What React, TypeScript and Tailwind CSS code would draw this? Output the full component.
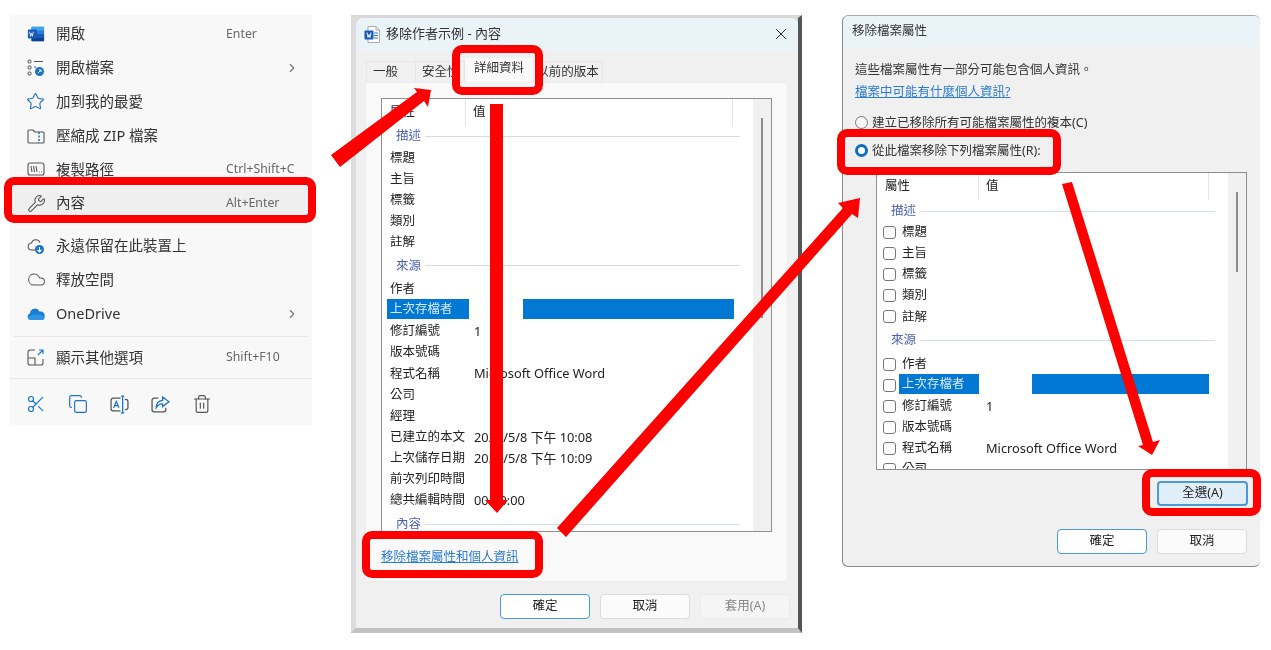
import React from "react";
import { Star, Wrench, Cloud, Scissors, Copy, Trash2, ChevronRight, X } from "lucide-react";

const WordIcon = ({ size = 20 }: { size?: number }) => (
  <svg width={size} height={size} viewBox="0 0 20 20">
    <rect x="5" y="2" width="14" height="16" rx="1" fill="#2b7cd3" />
    <rect x="5" y="2" width="14" height="4" fill="#41a5ee" />
    <rect x="5" y="10" width="14" height="4" fill="#185abd" />
    <rect x="5" y="14" width="14" height="4" fill="#103f91" />
    <rect x="1" y="5" width="10" height="10" rx="1" fill="#185abd" />
    <path d="M3 7.500l1 5 1-3.500 1 3.500 1-5" stroke="#fff" strokeWidth="0.9" fill="none" />
  </svg>
);

const WordDoc = () => (
  <svg width="16" height="17" viewBox="0 0 16 17">
    <path d="M4 .5h8l3.500 3.500v12.500H4z" fill="#fff" stroke="#aaa" strokeWidth="1" />
    <path d="M12 .5v3.500h3.500" fill="none" stroke="#aaa" strokeWidth="1" />
    <path d="M10 7h4M10 9.500h4M10 12h4" stroke="#2b7cd3" strokeWidth="1" />
    <rect x="0.500" y="4.500" width="9" height="9" rx="1" fill="#185abd" />
    <path d="M2 6.500l1 5 1-3 1 3 1-5" stroke="#fff" strokeWidth="0.9" fill="none" transform="translate(1 0)" />
  </svg>
);

const OpenWith = () => (
  <svg width="18" height="18" viewBox="0 0 18 18" fill="none" stroke="#555" strokeWidth="1">
    <rect x="1" y="1" width="3" height="3" rx="1" />
    <rect x="1" y="7" width="3" height="3" rx="1" />
    <rect x="1" y="13" width="3" height="3" rx="1" />
    <path d="M7 2.500h9M7 8h2" />
    <circle cx="12.500" cy="12.500" r="4.500" fill="#1a73c8" stroke="none" />
    <path d="M11 14l3-3M12 11h2v2" stroke="#fff" />
  </svg>
);

const ZipFolder = () => (
  <svg width="18" height="18" viewBox="0 0 18 18" fill="none" stroke="#555" strokeWidth="1.100">
    <path d="M1 4a1 1 0 0 1 1-1h4l2 2h8a1 1 0 0 1 1 1v9a1 1 0 0 1-1 1H2a1 1 0 0 1-1-1z" />
    <path d="M12 5v11" stroke="#1a73c8" strokeDasharray="2 1.500" strokeWidth="1.600" />
  </svg>
);

const CopyPath = () => (
  <svg width="18" height="18" viewBox="0 0 18 18" fill="none" stroke="#555" strokeWidth="1.100">
    <rect x="1" y="3" width="16" height="12" rx="2" />
    <path d="M4 6l1 6M6.500 6l1 6M9 6l1 6" />
    <path d="M12 12h.8M14 12h.8" />
  </svg>
);

const CloudDown = () => (
  <svg width="18" height="18" viewBox="0 0 18 18" fill="none" stroke="#555" strokeWidth="1.100">
    <path d="M5 13a3.500 3.500 0 0 1-.5-7 4.500 4.500 0 0 1 8.500-.5" />
    <path d="M5 13h3" />
    <circle cx="12.500" cy="12.500" r="4.500" fill="#1a73c8" stroke="none" />
    <path d="M12.500 10v5M10.500 13l2 2 2-2" stroke="#fff" />
  </svg>
);

const OneDrive = () => (
  <svg width="18" height="18" viewBox="0 0 18 18">
    <path d="M4 15a3.500 3.500 0 0 1-1-6.800A5 5 0 0 1 12.500 6.500 4.300 4.300 0 0 1 17.500 12a3 3 0 0 1-2 3z" fill="#1a7fd4" />
    <path d="M1 12.500c3-3.500 11-4 16.500-.5a3 3 0 0 1-2 3H4a3.500 3.500 0 0 1-3-2.500z" fill="#2f95e3" />
  </svg>
);

const ShowMore = () => (
  <svg width="18" height="18" viewBox="0 0 18 18" fill="none" stroke="#555" strokeWidth="1.100">
    <path d="M8 2H3a2 2 0 0 0-2 2v11a2 2 0 0 0 2 2h11a2 2 0 0 0 2-2v-4" />
    <path d="M1 10h7v7" />
    <path d="M11 7l5-5M12 2h4v4" stroke="#1a73c8" />
  </svg>
);

const Rename = () => (
  <svg width="19" height="19" viewBox="0 0 18 18" fill="none" stroke="#555" strokeWidth="1.200">
    <path d="M10 3H3a2 2 0 0 0-2 2v8a2 2 0 0 0 2 2h7" />
    <path d="M3.500 12l2.500-6 2.500 6M4.500 10h3" stroke="#1a73c8" />
    <path d="M12 1v16M10.500 1h3M10.500 17h3" stroke="#1a73c8" />
    <path d="M14 4.500a2 2 0 0 1 3 1.500v6a2 2 0 0 1-3 1.500" />
  </svg>
);

const ShareIcon = () => (
  <svg width="19" height="19" viewBox="0 0 18 18" fill="none" stroke="#555" strokeWidth="1.200">
    <path d="M7 3H3a2 2 0 0 0-2 2v9a2 2 0 0 0 2 2h9a2 2 0 0 0 2-2v-2" />
    <path d="M11 2l6 4.500-6 4.500V8.500c-3 0-4.500 1-6 3.500 0-4 2-6.500 6-7z" stroke="#1a73c8" />
  </svg>
);

function MenuItem({ icon, label, hint, arrow }: { icon: React.ReactNode; label: string; hint?: string; arrow?: boolean }) {
  return (
    <div className="flex h-[33.800px] items-center pl-[17px] text-[14.500px] text-[#333]">
      <div className="flex w-[29px] shrink-0 items-center">{icon}</div>
      <div className="w-[170px] shrink-0 whitespace-nowrap">{label}</div>
      {hint && <div className="whitespace-nowrap text-[12.300px] text-[#666]">{hint}</div>}
      {arrow && <ChevronRight className="ml-[59px] text-[#777]" size={14} />}
    </div>
  );
}

function Menu() {
  return (
    <div className="absolute left-[10px] top-[15px] flex h-[410px] w-[302px] flex-col bg-[#f8f8f8] pt-[2.400px]">
      <MenuItem icon={<WordIcon size={18} />} label="開啟" hint="Enter" />
      <MenuItem icon={<OpenWith />} label="開啟檔案" arrow />
      <MenuItem icon={<Star size={19} className="-ml-[1px] text-[#1a73c8]" strokeWidth={1.400} />} label="加到我的最愛" />
      <MenuItem icon={<ZipFolder />} label="壓縮成 ZIP 檔案" />
      <MenuItem icon={<CopyPath />} label="複製路徑" hint="Ctrl+Shift+C" />
      <div className="rounded bg-[#efefef]">
        <MenuItem icon={<Wrench size={19} className="text-[#555]" strokeWidth={1.300} />} label="內容" hint="Alt+Enter" />
      </div>
      <div className="h-[9px] shrink-0" />
      <MenuItem icon={<CloudDown />} label="永遠保留在此裝置上" />
      <MenuItem icon={<Cloud size={19} className="text-[#555]" strokeWidth={1.300} />} label="釋放空間" />
      <MenuItem icon={<OneDrive />} label={"OneDrive"} arrow />
      <div className="mx-[4px] mt-[5px] mb-[4px] h-px bg-[#e8e8e8]" />
      <MenuItem icon={<ShowMore />} label="顯示其他選項" hint="Shift+F10" />
      <div className="mt-[4px] h-px bg-[#e8e8e8]" />
      <div className="flex flex-1 items-center gap-[22px] pl-[16px] pt-[4px]">
        <Scissors size={20} className="text-[#1a73c8]" strokeWidth={1.400} />
        <Copy size={20} className="text-[#1a73c8]" strokeWidth={1.400} />
        <Rename />
        <ShareIcon />
        <Trash2 size={20} className="text-[#555]" strokeWidth={1.400} />
      </div>
    </div>
  );
}

function Section({ label, h, left }: { label: string; h: string; left: string }) {
  return (
    <div className={`flex shrink-0 items-center pr-[13px] text-[12.500px] text-[#4a5fb5] ${h} ${left}`}>
      <span className="whitespace-nowrap">{label}</span>
      <div className="ml-[4px] h-px flex-1 bg-[#d5dcf0]" />
    </div>
  );
}

function Row({ name, value }: { name: string; value?: string }) {
  return (
    <div className="flex h-[21.100px] shrink-0 items-center pl-[8px] text-[12.500px] text-[#222]">
      <div className="w-[84px] shrink-0 whitespace-nowrap">{name}</div>
      <div className="whitespace-nowrap text-[12.800px]">{value}</div>
    </div>
  );
}

function CheckRow({ name, value }: { name: string; value?: string }) {
  return (
    <div className="flex h-[21.100px] shrink-0 items-center pl-[6px] text-[12.500px] text-[#222]">
      <div className="mr-[6px] h-[13px] w-[13px] shrink-0 rounded-[3px] border border-[#777] bg-white" />
      <div className="w-[84px] shrink-0 whitespace-nowrap">{name}</div>
      <div className="whitespace-nowrap text-[12.800px]">{value}</div>
    </div>
  );
}

function Header({ nameW, valueW }: { nameW: string; valueW: string }) {
  return (
    <div className="flex h-[27px] shrink-0 text-[12.500px] text-[#222]">
      <div className={`flex items-center border-r border-[#e5e5e5] ${nameW}`}>屬性</div>
      <div className={`flex items-center border-r border-[#e5e5e5] pl-[7px] ${valueW}`}>值</div>
    </div>
  );
}

function Btn({ label, primary, disabled }: { label: string; primary?: boolean; disabled?: boolean }) {
  return (
    <div
      className={`flex h-[25px] w-[90px] items-center justify-center rounded-[4px] border text-[12.500px] ${
        primary ? "border-[#4a9ad8] bg-white text-[#222]" : disabled ? "border-[#ececec] bg-[#f5f5f5] text-[#888]" : "border-[#dcdcdc] bg-[#fbfbfb] text-[#222]"
      }`}
    >
      {label}
    </div>
  );
}

function Gutter({ thumb }: { thumb: string }) {
  return (
    <div className="flex w-[18px] shrink-0 justify-center bg-[#f0f0f0] pt-[19px]">
      <div className={`w-[2px] bg-[#8c8c8c] ${thumb}`} />
    </div>
  );
}

function MiddleDialog() {
  return (
    <div className="absolute left-[351px] top-[15px] h-[618px] w-[451px] border-b-[5px] border-l-[5px] border-r-[4px] border-t-[3px] border-b-[#c2c2c2] border-l-[#dcdcdc] border-r-[#555] border-t-[#d8d8d8] bg-[#dcdcdc]">
      <div className="flex h-full w-[442px] flex-col rounded-t-[8px] bg-[#f0f0f0]">
        <div className="flex h-[32px] shrink-0 items-center rounded-t-[8px] bg-[#eaf3f7] pl-[8px] pr-[8px] text-[13px] text-[#333]">
          <WordDoc />
          <span className="ml-[6px] flex-1 whitespace-nowrap">移除作者示例 - 內容</span>
          <X size={18} className="text-[#222]" strokeWidth={1.300} />
        </div>
        <div className="flex h-[32px] shrink-0 items-end pl-[10px] text-[12.500px] text-[#333]">
          <div className="flex h-[21px] w-[50px] items-center border border-b-0 border-[#e6e6e6] pl-[6px]">一般</div>
          <div className="flex h-[21px] w-[49px] items-center border-y border-r border-b-0 border-[#e6e6e6] pl-[6px]">安全性</div>
          <div className="flex h-[24px] w-[68px] items-center justify-center bg-[#f9f9f9] pb-[3px]">詳細資料</div>
          <div className="flex h-[21px] w-[70px] items-center justify-center border border-b-0 border-l-0 border-[#e6e6e6]">以前的版本</div>
        </div>
        <div className="ml-[9px] flex h-[500px] w-[423px] shrink-0 flex-col border border-[#ececec] bg-[#f9f9f9] pl-[15px] pt-[15px]">
          <div className="flex h-[434px] w-[391px] shrink-0 overflow-hidden border border-[#8f8f8f] bg-white">
            <div className="flex flex-1 flex-col">
              <Header nameW="w-[84px] pl-[8px]" valueW="w-[267px]" />
              <Section label="描述" h="h-[21.500px]" left="pl-[14px]" />
              {["標題", "主旨", "標籤", "類別", "註解"].map((n) => (
                <Row key={n} name={n} />
              ))}
              <Section label="來源" h="h-[26px]" left="pl-[14px]" />
              <Row name="作者" />
              <div className="flex h-[21.100px] shrink-0 items-center pl-[5px] text-[12.500px] text-[#d8e8f8]">
                <div className="-mt-[3px] flex h-[20px] w-[82px] items-center whitespace-nowrap bg-[#0078d4] pl-[3px]">上次存檔者</div>
                <div className="-mt-[3px] ml-[54px] h-[20px] w-[211px] bg-[#0078d4]" />
              </div>
              <Row name="修訂編號" value="1" />
              <Row name="版本號碼" />
              <Row name="程式名稱" value="Microsoft Office Word" />
              <Row name="公司" />
              <Row name="經理" />
              <Row name="已建立的本文" value="2021/5/8 下午 10:08" />
              <Row name="上次儲存日期" value="2021/5/8 下午 10:09" />
              <Row name="前次列印時間" />
              <Row name="總共編輯時間" value="00:00:00" />
              <Section label="內容" h="h-[27px]" left="pl-[14px]" />
            </div>
            <Gutter thumb="h-[200px]" />
          </div>
          <div className="mt-[16px] whitespace-nowrap text-[12.500px] leading-[18px] text-[#2b7cd3] underline">移除檔案屬性和個人資訊</div>
        </div>
        <div className="flex justify-end gap-[10px] pr-[8px] pt-[12px]">
          <Btn label="確定" primary />
          <Btn label="取消" />
          <Btn label="套用(A)" disabled />
        </div>
      </div>
    </div>
  );
}

function Radio({ on, label, className }: { on?: boolean; label: string; className: string }) {
  return (
    <div className={`flex h-[20px] items-center text-[12.500px] text-[#333] ${className}`}>
      {on ? (
        <div className="mr-[4px] h-[13px] w-[13px] rounded-full border-[3.500px] border-[#0f6cbd] bg-white" />
      ) : (
        <div className="mr-[4px] h-[13px] w-[13px] rounded-full border border-[#777] bg-[#f5f5f5]" />
      )}
      <span className="whitespace-nowrap pt-[2px]">{label}</span>
    </div>
  );
}

function RightDialog() {
  return (
    <div className="absolute left-[842px] top-[15px] flex h-[552px] w-[418px] flex-col rounded-[6px] border-x border-y border-r-0 border-b-[#8a8a8a] border-l-[#8a8a8a] border-t-[#aaa] bg-[#f0f0f0]">
      <div className="flex h-[31px] shrink-0 items-center rounded-t-[6px] bg-[#eaf3f7] pl-[9px] text-[12.500px] text-[#333]">移除檔案屬性</div>
      <div className="flex flex-1 flex-col pl-[12px]">
        <div className="mt-[12px] whitespace-nowrap text-[12.500px] leading-[22px] text-[#333]">這些檔案屬性有一部分可能包含個人資訊。</div>
        <div className="whitespace-nowrap text-[12.500px] leading-[22px] text-[#2b7cd3] underline">檔案中可能有什麼個人資訊?</div>
        <Radio label="建立已移除所有可能檔案屬性的複本(C)" className="mt-[9px]" />
        <Radio on label="從此檔案移除下列檔案屬性(R):" className="mt-[8px]" />
        <div className="ml-[21px] mt-[12px] flex h-[298px] w-[371px] shrink-0 overflow-hidden border border-[#8f8f8f] bg-white">
          <div className="flex flex-1 flex-col">
            <Header nameW="w-[102px] pl-[8px]" valueW="w-[230px]" />
            <Section label="描述" h="h-[22px]" left="pl-[14px]" />
            {["標題", "主旨", "標籤", "類別", "註解"].map((n) => (
              <CheckRow key={n} name={n} />
            ))}
            <Section label="來源" h="h-[26px]" left="pl-[14px]" />
            <CheckRow name="作者" />
            <div className="flex h-[21.100px] shrink-0 items-center pl-[6px] text-[12.500px] text-[#d8e8f8]">
              <div className="mr-[3px] h-[13px] w-[13px] shrink-0 rounded-[3px] border border-[#777] bg-white" />
              <div className="-mt-[2px] flex h-[20px] w-[80px] items-center whitespace-nowrap bg-[#0078d4] pl-[3px]">上次存檔者</div>
              <div className="-mt-[2px] ml-[53px] h-[20px] w-[177px] bg-[#0078d4]" />
            </div>
            <CheckRow name="修訂編號" value="1" />
            <CheckRow name="版本號碼" />
            <CheckRow name="程式名稱" value="Microsoft Office Word" />
            <CheckRow name="公司" />
          </div>
          <Gutter thumb="h-[80px]" />
        </div>
        <div className="mt-[11px] flex justify-end pr-[12px]">
          <div className="flex h-[25px] w-[91px] items-center justify-center rounded-[4px] border-2 border-[#4a9ad8] bg-[#e0eef9] text-[12.500px] text-[#222]">全選(A)</div>
        </div>
        <div className="mt-[23px] flex justify-end gap-[10px] pr-[13px]">
          <Btn label="確定" primary />
          <Btn label="取消" />
        </div>
      </div>
    </div>
  );
}

const boxes = [
  "left-[4px] top-[177px] h-[46px] w-[312px]",
  "left-[452px] top-[45px] h-[50px] w-[91px]",
  "left-[362px] top-[531px] h-[47px] w-[181px]",
  "left-[837px] top-[129px] h-[46px] w-[224px]",
  "left-[1142px] top-[469px] h-[47px] w-[119px]",
];

export default function App() {
  return (
    <div className="relative h-[650px] w-[1271px] overflow-hidden bg-white font-['Noto_Sans','Noto_Sans_CJK_TC',sans-serif] blur-[0.4px]">
      <Menu />
      <MiddleDialog />
      <RightDialog />
      {boxes.map((b) => (
        <div key={b} className={`absolute rounded-[10px] border-[8px] border-[#ff0000] ${b}`} />
      ))}
      <svg className="absolute left-0 top-0" width="1271" height="650" fill="#ff0000">
        <polygon points="331,155 417,92 414,88 431,90 428,107 424,101 340,167" />
        <polygon points="490,104 503,104 503,500 508,500 497,513 485,500 490,500" />
        <polygon points="557,528 843,208 838,203 860,198 858,218 852,214 566,537" />
        <polygon points="1062,184 1072,182 1153,442 1160,440 1152,455 1138,446 1143,445" />
      </svg>
    </div>
  );
}
